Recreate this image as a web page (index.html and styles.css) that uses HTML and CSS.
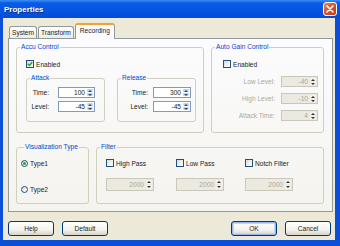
FILE: index.html
```html
<!DOCTYPE html>
<html lang="en">
<head>
    <meta charset="UTF-8">
    <title>Properties</title>
    <link rel="stylesheet" href="styles.css">
</head>
<body>

<div class="window">
    <div class="titlebar">
        <h1>Properties</h1>
        <span class="close">
            <svg width="8" height="8" viewBox="0 0 8 8"><path d="M1 1L7 7M7 1L1 7" stroke="#fff" stroke-width="1.6" stroke-linecap="round"/></svg>
        </span>
    </div>

    <div class="client">
        <div class="tabs">
            <span class="tab">System</span>
            <span class="tab">Transform</span>
            <span class="tab active">Recording</span>
        </div>

        <div class="panel">
            <div class="row">
                <fieldset class="accu">
                    <legend>Accu Control</legend>
                    <label class="check"><span class="box"><svg width="6" height="6" viewBox="0 0 6 6"><path d="M0.8 2.8L2.4 4.4L5.2 1.2" stroke="#21a121" stroke-width="1.4" fill="none"/></svg></span>Enabled</label>
                    <div class="subgroups">
                        <fieldset class="attack">
                            <legend>Attack</legend>
                            <div class="spin-rows">
                                <label>Time:</label>
                                <div class="spin"><input value="100"><span class="arrows"><i class="up"></i><i class="down"></i></span></div>
                                <label>Level:</label>
                                <div class="spin"><input value="-45"><span class="arrows"><i class="up"></i><i class="down"></i></span></div>
                            </div>
                        </fieldset>
                        <fieldset class="release">
                            <legend>Release</legend>
                            <div class="spin-rows">
                                <label>Time:</label>
                                <div class="spin"><input value="300"><span class="arrows"><i class="up"></i><i class="down"></i></span></div>
                                <label>Level:</label>
                                <div class="spin"><input value="-45"><span class="arrows"><i class="up"></i><i class="down"></i></span></div>
                            </div>
                        </fieldset>
                    </div>
                </fieldset>

                <fieldset class="agc">
                    <legend>Auto Gain Control</legend>
                    <label class="check"><span class="box"></span>Enabled</label>
                    <div class="spin-rows disabled">
                        <label>Low Level:</label>
                        <div class="spin"><input value="-40" disabled><span class="arrows"><i class="up"></i><i class="down"></i></span></div>
                        <label>High Level:</label>
                        <div class="spin"><input value="-10" disabled><span class="arrows"><i class="up"></i><i class="down"></i></span></div>
                        <label>Attack Time:</label>
                        <div class="spin"><input value="4" disabled><span class="arrows"><i class="up"></i><i class="down"></i></span></div>
                    </div>
                </fieldset>
            </div>

            <div class="row second">
                <fieldset class="vis">
                    <legend>Visualization Type</legend>
                    <label class="radio"><span class="dot checked"></span>Type1</label>
                    <label class="radio"><span class="dot"></span>Type2</label>
                </fieldset>

                <fieldset class="filter">
                    <legend>Filter</legend>
                    <div class="filter-grid disabled">
                        <label class="check"><span class="box"></span>High Pass</label>
                        <label class="check"><span class="box"></span>Low Pass</label>
                        <label class="check"><span class="box"></span>Notch Filter</label>
                        <div class="spin"><input value="2000" disabled><span class="arrows"><i class="up"></i><i class="down"></i></span></div>
                        <div class="spin"><input value="2000" disabled><span class="arrows"><i class="up"></i><i class="down"></i></span></div>
                        <div class="spin"><input value="2000" disabled><span class="arrows"><i class="up"></i><i class="down"></i></span></div>
                    </div>
                </fieldset>
            </div>
        </div>

        <div class="buttons">
            <button>Help</button>
            <button>Default</button>
            <button class="default ok">OK</button>
            <button>Cancel</button>
        </div>
    </div>
</div>

</body>
</html>
```

FILE: styles.css
```css
* {
    box-sizing: border-box;
}
body {
    margin: 0;
    font-family: "Liberation Sans", Arial, sans-serif;
    font-size: 6.6px;
    color: #1b1b1b;
}
.window {
    width: 340px;
    height: 246px;
    display: flex;
    flex-direction: column;
    background: #0b4fd8;
    overflow: hidden;
}
.titlebar {
    height: 18px;
    display: flex;
    align-items: center;
    justify-content: space-between;
    padding: 0 3px 0 4px;
    background: linear-gradient(#3d8ff5, #0a5ae6 3px, #0556e3 55%, #024bd8);
}
.titlebar h1 {
    margin: 0;
    font-size: 8px;
    font-weight: bold;
    color: #fff;
    text-shadow: 1px 1px 0 #0c2d8a;
}
.close {
    width: 14px;
    height: 14px;
    border: 1px solid #fff;
    border-radius: 3px;
    background: linear-gradient(135deg, #ea8262, #d9542f 45%, #c23a17);
    display: flex;
    align-items: center;
    justify-content: center;
}
.client {
    flex: 1;
    margin: 0 5px 6px 3px;
    padding: 5px 2px 4px 5px;
    background: #ece9d8;
    display: flex;
    flex-direction: column;
}

/* tabs */
.tabs {
    display: flex;
    align-items: flex-end;
    height: 15px;
    padding-left: 1px;
}
.tab {
    height: 12px;
    padding: 0 2px;
    margin-right: 1px;
    border: 1px solid #919b9c;
    border-bottom: none;
    border-radius: 3px 3px 0 0;
    background: linear-gradient(#fff, #ecebe6);
    line-height: 11px;
}
.tab.active {
    position: relative;
    z-index: 1;
    height: 16px;
    margin-bottom: -1px;
    padding: 0 4px;
    border-top: 2px solid #f1a232;
    background: #fcfcfe;
    line-height: 12px;
}
.panel {
    border: 1px solid #919b9c;
    background: linear-gradient(#fcfcfe, #f4f3ee);
    padding: 4px 8px 7px 7px;
}
.row {
    display: flex;
    gap: 7px;
}
.row.second {
    margin-top: 10px;
}

/* group boxes */
fieldset {
    margin: 0;
    padding: 0;
    min-width: 0;
    border: 1px solid #d0d0bf;
    border-radius: 3px;
}
legend {
    margin-left: 3px;
    padding: 0 1px;
    color: #0046d5;
    line-height: 8px;
}
.accu {
    width: 188px;
    padding-bottom: 10px;
}
.agc {
    flex: 1;
}
.accu > .check {
    margin: 9px 0 0 9px;
}
.agc > .check {
    margin: 9px 0 0 11px;
}
.subgroups {
    display: flex;
    gap: 12px;
    margin: 6px 7px 0 9px;
}
.attack {
    width: 79px;
}
.release {
    flex: 1;
}

/* label + spin box rows */
.spin-rows {
    display: grid;
    grid-template-columns: 1fr 37px;
    column-gap: 9px;
    row-gap: 3px;
    align-items: center;
    padding: 5px 9px 9px 0;
}
.spin-rows label {
    text-align: right;
}
.release .spin-rows {
    grid-template-columns: 1fr 38px;
    column-gap: 5px;
    padding-right: 4px;
}
.agc .spin-rows {
    column-gap: 6px;
    row-gap: 6px;
    padding: 8px 5px 0 0;
}
.disabled label {
    color: #aca899;
}

/* check boxes and radios */
.check,
.radio {
    display: flex;
    align-items: center;
    gap: 2px;
    height: 8px;
    white-space: nowrap;
}
.filter-grid .check {
    color: #1b1b1b;
}
.box {
    width: 8px;
    height: 8px;
    border: 1px solid #1c5180;
    background: linear-gradient(135deg, #dcdcd5, #fff);
    display: flex;
    align-items: center;
    justify-content: center;
}
.vis {
    width: 73px;
    padding: 8px 0 0 4px;
}
.vis .radio + .radio {
    margin-top: 18px;
}
.dot {
    width: 7px;
    height: 7px;
    border: 1px solid #1c5180;
    border-radius: 50%;
    background: linear-gradient(135deg, #dcdcd5, #fff);
    display: flex;
    align-items: center;
    justify-content: center;
}
.dot.checked::after {
    content: "";
    width: 3px;
    height: 3px;
    border-radius: 50%;
    background: #2ca52c;
}
.filter {
    flex: 1;
}
.filter-grid {
    display: grid;
    grid-template-columns: 70px 69px 70px;
    row-gap: 11px;
    padding: 8px 0 12px 9px;
}
.filter-grid .spin {
    width: 48px;
    height: 13px;
}

/* spin boxes */
.spin {
    display: flex;
    height: 11px;
    border: 1px solid #7f9db9;
    background: #fff;
}
.spin input {
    flex: 1;
    min-width: 0;
    border: 0;
    padding: 0 2px 0 0;
    font: inherit;
    color: #1b1b1b;
    text-align: right;
    background: transparent;
    outline: none;
}
.arrows {
    width: 7px;
    padding: 1px 1px 1px 0;
    display: flex;
    flex-direction: column;
    gap: 1px;
}
.arrows i {
    flex: 1;
    display: flex;
    align-items: center;
    justify-content: center;
    border-radius: 1px;
    background: #c4d3fa;
}
.arrows i::after {
    content: "";
    border-left: 2px solid transparent;
    border-right: 2px solid transparent;
}
.up::after {
    border-bottom: 2px solid #3c4c6e;
}
.down::after {
    border-top: 2px solid #3c4c6e;
}
.disabled .spin {
    border-color: #c9c7ba;
    background: #eceae0;
}
.disabled .spin input {
    color: #aca899;
}
.disabled .arrows i {
    background: #f4f3ee;
}
.disabled .up::after {
    border-bottom-color: #333;
}
.disabled .down::after {
    border-top-color: #333;
}

/* dialog buttons */
.buttons {
    display: flex;
    gap: 8px;
    margin-top: 9px;
    padding-right: 2px;
}
.buttons button {
    width: 46px;
    height: 15px;
    padding: 0;
    border: 1px solid #003c74;
    border-radius: 3px;
    background: linear-gradient(#fff, #f3f3ef 60%, #d8d2c6);
    font: inherit;
    color: #1b1b1b;
}
.buttons .ok {
    margin-left: auto;
}
.buttons .default {
    box-shadow: inset 0 0 0 1px #9ab6ee, inset 0 0 0 2px #c4d5f7;
}
```
